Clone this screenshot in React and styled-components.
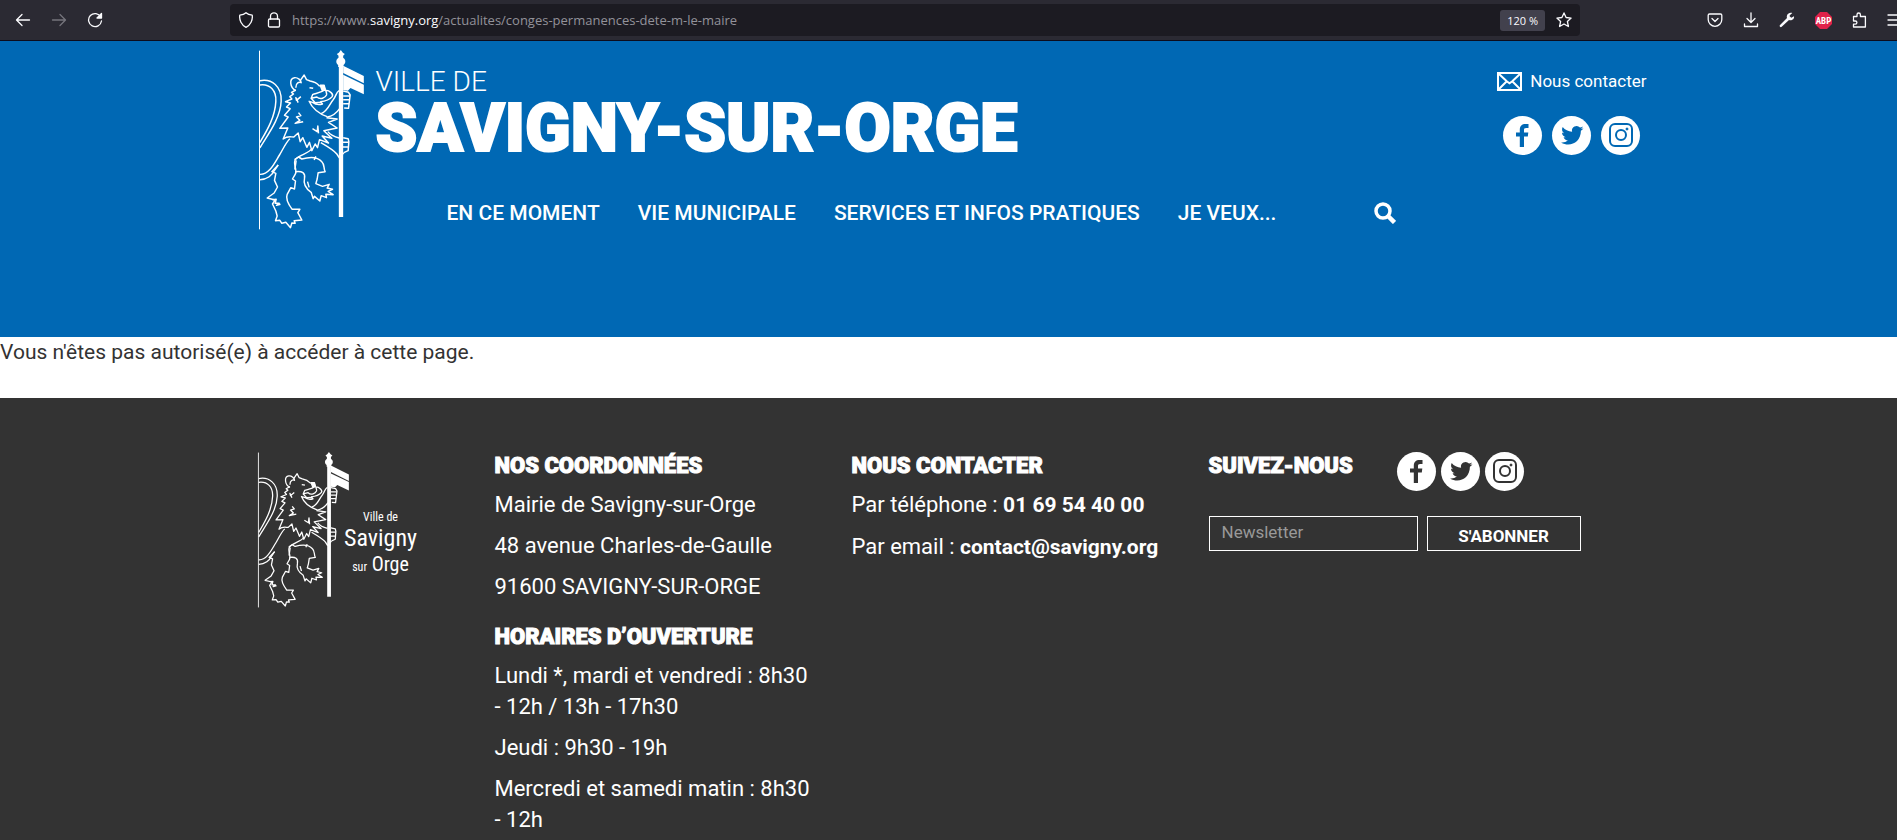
import React from 'react';
import styled, { createGlobalStyle, css } from 'styled-components'

const GlobalStyle = createGlobalStyle`
  * {
    box-sizing: border-box;
  }
  body {
    margin: 0;
    background: #333;
    font-family: 'Roboto', sans-serif;
    font-size: 22px;
    line-height: 31px;
    color: #333;
    overflow-x: hidden;
  }
  a {
    color: inherit;
    text-decoration: none;
  }
  p, h1, h2 {
    margin: 0;
  }
`

/* ---- browser bar ---- */

const Toolbar = styled.div`
  display: flex;
  align-items: center;
  height: 41px;
  padding-left: 5px;
  background: #2b2a33;
  border-bottom: 1px solid #0c0c1d;
  overflow: hidden;
`

const ToolGroup = styled.div`
  display: flex;
  flex: none;
  ${(p) => p.$end && css`margin-right: -16px;`}
`

const Spring = styled.div`
  flex: 1;
  max-width: 117px;
`

const ToolButton = styled.button`
  display: flex;
  align-items: center;
  justify-content: center;
  width: 36px;
  height: 32px;
  padding: 0;
  border: 0;
  background: none;
  color: #fbfbfe;
  &:disabled {
    color: #75747c;
  }
`

const UrlBar = styled.div`
  display: flex;
  align-items: center;
  flex: 1;
  height: 32px;
  padding: 0 2px;
  border-radius: 4px;
  background: #1c1b22;
`

const UrlButton = styled.button`
  display: flex;
  align-items: center;
  justify-content: center;
  width: 28px;
  height: 28px;
  padding: 0;
  border: 0;
  background: none;
  color: #fbfbfe;
`

const Url = styled.div`
  flex: 1;
  padding-left: 4px;
  font-family: 'Open Sans', sans-serif;
  font-size: 13px;
  line-height: 20px;
  color: #93929a;
  white-space: nowrap;
  overflow: hidden;
  b {
    font-weight: 400;
    color: #fbfbfe;
  }
`

const ZoomLevel = styled.button`
  height: 21px;
  margin-right: 5px;
  padding: 0 7px;
  border: 0;
  border-radius: 3px;
  background: #42414d;
  color: #fbfbfe;
  font-family: 'Open Sans', sans-serif;
  font-size: 11px;
`

/* ---- page header ---- */

const Header = styled.header`
  min-height: 296px;
  background: #0068b4;
  color: white;
`

const HeaderInner = styled.div`
  display: flex;
  align-items: flex-start;
  max-width: 1404px;
  margin: 0 auto;
  padding: 9px 4px 0 11px;
`

const HeaderMain = styled.div`
  flex: 1;
  padding: 16px 0 0 11px;
`

const CityPrefix = styled.div`
  font-size: 28px;
  font-weight: 300;
  line-height: 32px;
`

const CityName = styled.h1`
  font-size: 67px;
  font-weight: 900;
  line-height: 60px;
  -webkit-text-stroke: 2px white;
`

const Nav = styled.nav`
  display: flex;
  align-items: center;
  gap: 38px;
  padding: 39px 0 0 71px;
  font-size: 21px;
  font-weight: 500;
  line-height: 32px;
`

const SearchButton = styled.button`
  display: flex;
  margin-left: 60px;
  padding: 0;
  border: 0;
  background: none;
  color: white;
`

const HeaderContact = styled.div`
  display: flex;
  flex-direction: column;
  align-items: center;
  gap: 20px;
  padding-top: 16px;
`

const ContactLink = styled.a`
  display: flex;
  align-items: center;
  gap: 8px;
  font-size: 17px;
  line-height: 30px;
`

const Socials = styled.div`
  display: flex;
  gap: ${(p) => p.$gap};
`

const SocialLink = styled.a`
  display: flex;
  width: 39px;
  height: 39px;
  border-radius: 50%;
  background: white;
  color: ${(p) => p.$color};
`

/* ---- message ---- */

const Message = styled.main`
  min-height: 61px;
  background: white;
  font-size: 21px;
`

/* ---- footer ---- */

const Footer = styled.footer`
  padding-top: 54px;
  background: #333;
  color: white;
  border-bottom: 2px solid #393337;
`

const FooterGrid = styled.div`
  display: grid;
  grid-template-columns: 2fr 3fr 3fr 4fr;
  max-width: 1428px;
  margin: 0 auto;
`

const FooterCol = styled.div`
  padding: 0 20px 0 22px;
  p {
    margin-bottom: 10px;
  }
  h2 + p {
    margin-top: 10px;
  }
  p + h2 {
    margin-top: 21px;
  }
`

const FooterTitle = styled.h2`
  font-size: 22px;
  font-weight: 900;
  line-height: 27px;
  text-transform: uppercase;
  -webkit-text-stroke: 1px white;
`

const Strong = styled.a`
  font-size: 21px;
  font-weight: 700;
`

const FooterBrand = styled.a`
  display: flex;
  align-items: flex-start;
`

const BrandText = styled.span`
  display: flex;
  flex-direction: column;
  align-items: center;
  width: 74px;
  margin-left: -6px;
  padding-top: 57px;
  font-family: 'Roboto Condensed', 'Roboto', sans-serif;
  font-size: 20px;
  line-height: 26px;
  small {
    font-size: 12px;
    line-height: 16px;
  }
`

const BrandTown = styled.span`
  font-size: 24px;
  line-height: 26px;
`

const FollowRow = styled.div`
  display: flex;
  align-items: flex-start;
  gap: 44px;
`

const NewsletterForm = styled.form`
  display: flex;
  gap: 9px;
  margin-top: 25px;
`

const NewsletterInput = styled.input`
  width: 209px;
  height: 35px;
  padding: 0 12px 4px;
  border: 1px solid white;
  border-radius: 0;
  background: none;
  color: white;
  font-family: inherit;
  font-size: 17px;
  &::placeholder {
    color: #999;
  }
`

const SubmitButton = styled.button`
  width: 154px;
  height: 35px;
  padding: 5px 0 0;
  border: 1px solid white;
  background: none;
  color: white;
  font-family: inherit;
  font-size: 17px;
  font-weight: 700;
`

const Lion = ({ width, height }) => (
  <svg width={width} height={height} viewBox="55 29 320 540" fill="none" stroke="white" strokeWidth="4.4" strokeLinejoin="round" aria-hidden="true">
    <path d="M59 31V567" strokeWidth="3" />
    {/* staff and pennant */}
    <g fill="white" stroke="none">
      <path d="M297 76h13v454h-13z" />
      <path d="M303 29l6 8 6 4-5 5v6c11 8 6 18 1 22v6h-16v-6c-5-4-10-14 1-22v-6l-5-5 6-4z" />
      <path d="M310 76l62 31v22l-62-31z" />
      <path d="M310 103l62 30v29l-40-19-8 8-14-2z" />
    </g>
    {/* tail */}
    <path d="M60 121C96 114 126 138 124 182C122 236 80 288 60 323" />
    <path d="M60 134C90 130 110 150 108 183C106 232 78 276 60 307" />
    <path d="M60 402C88 404 104 368 119 344C130 326 138 306 150 295" />
    <path d="M60 418C82 418 98 404 104 390L115 374" />
    {/* head */}
    <path d="M168 151C150 143 147 114 164 112C174 111 184 120 184 127C178 124 168 127 168 142" />
    <path d="M181 121L193 104L200 118L211 122C222 124 231 128 238 136L252 137L256 148C244 157 232 158 219 162L214 174L231 170C242 180 256 172 260 164C262 158 258 156 258 150C270 150 282 162 277 169C270 178 254 183 241 184" />
    <path d="M241 135h12l3 12-9 3z" fill="white" />
    <path d="M209 142l11 2M214 174L226 187L244 186L248 191C236 195 226 192 218 186L208 183C216 203 238 221 262 229" />
    {/* mane */}
    <path d="M168 149L155 156L161 161L150 169L156 176L137 184L152 188L140 200L151 205L134 225L145 230L120 264L144 263L130 296C143 286 152 290 162 290L175 278L181 304L189 292L201 321L209 306L216 331L226 311L233 322L239 298L266 308L247 287L276 294L252 271L292 263L266 246L292 236L260 232" />
    <path d="M183 169l-13 11-2-8 7 15M176 217l7 9-13 4 10 10-14 9 24-5M218 265l14 9 2-17 2 22" />
    {/* fore legs */}
    <path d="M244 220C266 210 268 192 280 178C290 166 288 156 298 151M262 230C278 228 290 218 300 204" />
    <path d="M310 152L326 156L331 164L326 204L313 203M310 167h19M310 178h19M310 190h17" />
    <path d="M264 274C272 284 286 290 298 293M243 307C262 318 282 330 291 341L298 352L312 337" />
    <path d="M310 292L325 295L327 304L325 331L312 337M300 306h26M300 320h26" />
    {/* hind legs */}
    <path d="M215 326C208 338 180 344 168 356C156 370 175 388 166 402L158 416L167 422L164 446L153 442L142 462C136 478 147 494 157 507L180 507L174 517L186 539L163 541L166 549L156 548L152 562L138 546L126 549L120 540L107 541L112 527L108 512L98 491L106 479L82 473L103 458L113 440L104 420L108 399L96 394L115 374" />
    <path d="M98 478l11-1-3 12h12l-8 6 12-3M165 388l4-28" />
    <path d="M164 358L176 350L186 356C206 350 232 348 246 364C256 374 250 384 256 394L235 397L232 416L228 430L248 438L268 432L262 443L278 447L265 453L280 463L258 462L260 472L244 466L240 482L224 468L220 475L214 456C200 446 190 430 194 414C197 398 188 391 166 394M228 348l-5 11M203 424l5 17" />
  </svg>
)

const socialShapes = {
  Facebook: <path fill="currentColor" d="M16.800 31V20.500H13V16.500h3.800v-2.800C16.800 10 19 8 22.500 8H25.500v4H23.200c-1.800 0-2.200.8-2.200 2.200v2.300h4.300l-.5 4H21V31z" />,
  Twitter: <path fill="currentColor" d="M31.500 12.200c-.8.4-1.700.6-2.600.7.9-.5 1.600-1.400 2-2.400-.9.5-1.900.9-2.900 1.100a4.600 4.600 0 0 0-7.900 4.200c-3.800-.2-7.200-2-9.400-4.800-1.300 2.200-.6 4.900 1.400 6.200-.8 0-1.500-.2-2.100-.6 0 2.300 1.600 4.200 3.700 4.600-.7.2-1.400.2-2.100.1.600 1.800 2.300 3.200 4.300 3.200a9.300 9.300 0 0 1-6.800 1.900c8.500 5.300 19.800.200 19.800-11.700.9-.6 1.900-1.500 2.600-2.500z" />,
  Instagram: (
    <g fill="none" stroke="currentColor" strokeWidth="2">
      <rect x="9" y="8" width="22" height="22" rx="5" />
      <circle cx="20" cy="19" r="5" />
      <circle cx="26" cy="13" r="1" fill="currentColor" strokeWidth="1" />
    </g>
  ),
}

const SocialLinks = ({ gap, color }) => (
  <Socials $gap={gap}>
    {Object.keys(socialShapes).map((name) => (
      <SocialLink key={name} href="#" $color={color} aria-label={name}>
        <svg width="39" height="39" viewBox="0 0 39 39" aria-hidden="true">{socialShapes[name]}</svg>
      </SocialLink>
    ))}
  </Socials>
)

const Icon = ({ children, size = 16 }) => (
  <svg width={size} height={size} viewBox="0 0 16 16" fill="none" stroke="currentColor" strokeWidth="1.300" strokeLinecap="round" strokeLinejoin="round" aria-hidden="true">
    {children}
  </svg>
)

const BrowserBar = () => (
  <Toolbar>
    <ToolGroup>
      <ToolButton aria-label="Précédent"><Icon><path d="M14.500 8H2M7 2.500L1.500 8 7 13.500" /></Icon></ToolButton>
      <ToolButton aria-label="Suivant" disabled><Icon><path d="M1.500 8H14M9 2.500L14.500 8 9 13.500" /></Icon></ToolButton>
      <ToolButton aria-label="Actualiser"><Icon><path d="M13.800 5A6.500 6.500 0 1 0 14.500 9" /><path d="M14.500 1.500V6H10z" fill="currentColor" /></Icon></ToolButton>
    </ToolGroup>
    <Spring />
    <UrlBar>
      <UrlButton aria-label="Protection"><Icon><path d="M8 .8C6.500 2.200 4 3 1.800 3.200 1 8 3.500 13 8 15.300 12.500 13 15 8 14.200 3.200 12 3 9.500 2.200 8 .8z" /></Icon></UrlButton>
      <UrlButton aria-label="Connexion sécurisée"><Icon><rect x="2.500" y="7" width="11" height="8" rx="1.200" /><path d="M4.500 7V4.300a3.500 3.500 0 0 1 7 0V7" /></Icon></UrlButton>
      <Url>https://www.<b>savigny.org</b>/actualites/conges-permanences-dete-m-le-maire</Url>
      <ZoomLevel>120 %</ZoomLevel>
      <UrlButton aria-label="Marque-page"><Icon><path d="M8 .9l2.100 4.600 5 .6-3.700 3.400 1 5L8 12l-4.400 2.500 1-5L.9 6.100l5-.6z" /></Icon></UrlButton>
    </UrlBar>
    <Spring />
    <ToolGroup $end>
      <ToolButton aria-label="Pocket"><Icon><path d="M2.500 2h11c.8 0 1.300.5 1.300 1.300V7.500a6.800 6.800 0 0 1-13.600 0V3.300C1.200 2.500 1.700 2 2.500 2z" /><path d="M5 6.500l3 3 3-3" /></Icon></ToolButton>
      <ToolButton aria-label="Téléchargements"><Icon><path d="M8 .8V10M4 6.500L8 10.500l4-4M1.500 12v2.500h13V12" /></Icon></ToolButton>
      <ToolButton aria-label="Outils"><Icon><path stroke="none" fill="currentColor" d="M15 4.200l-2.700 1.500-1.700-1.500.200-.900L13.300 1C11 .300 8 1.400 7.800 4.300c0 .6 0 1.200.2 1.700L1 13c-.5.500-.5 1.200 0 1.700.5.600 1.200.600 1.700 0L10 8c2.800.9 5.600-1 5-3.800z" /></Icon></ToolButton>
      <ToolButton aria-label="Adblock Plus">
        <svg width="17" height="17" viewBox="0 0 17 17">
          <path fill="#e1224a" d="M5 0h7l5 5v7l-5 5H5l-5-5V5z" />
          <text x="8.500" y="11.500" fill="white" fontFamily="Roboto Condensed" fontWeight="700" fontSize="9" textAnchor="middle">ABP</text>
        </svg>
      </ToolButton>
      <ToolButton aria-label="Extensions"><Icon><path d="M2.500 6V4.500H6V2.700a1.700 1.700 0 0 1 3.400 0v1.800h5V15H2.500v-2.800h1.800a1.600 1.600 0 0 0 0-3.200H2.500V7" /></Icon></ToolButton>
      <ToolButton aria-label="Menu"><Icon><path d="M1 3h14M1 8h14M1 13h14" /></Icon></ToolButton>
    </ToolGroup>
  </Toolbar>
)

const navItems = ['EN CE MOMENT', 'VIE MUNICIPALE', 'SERVICES ET INFOS PRATIQUES', 'JE VEUX...']

const App = () => {
  return (
    <>
      <GlobalStyle />
      <BrowserBar />

      <Header>
        <HeaderInner>
          <a href="#" aria-label="Accueil"><Lion width={107} height={180} /></a>
          <HeaderMain>
            <CityPrefix>VILLE DE</CityPrefix>
            <CityName>SAVIGNY-SUR-ORGE</CityName>
            <Nav>
              {navItems.map((item) => <a href="#" key={item}>{item}</a>)}
              <SearchButton aria-label="Rechercher">
                <svg width="22" height="22" viewBox="0 0 22 22" fill="none" stroke="currentColor" aria-hidden="true">
                  <circle cx="9" cy="9" r="7" strokeWidth="3.500" />
                  <path d="M14 14l6.500 6.500" strokeWidth="4.500" />
                </svg>
              </SearchButton>
            </Nav>
          </HeaderMain>
          <HeaderContact>
            <ContactLink href="#">
              <svg width="25" height="19" viewBox="0 0 25 19" fill="none" stroke="currentColor" aria-hidden="true">
                <rect x="1" y="1" width="23" height="17" strokeWidth="2" />
                <path d="M2 2l8 7.500 2.500 1.800 2.500-1.800L23 2M2 17l7.500-7.500M23 17l-7.500-7.500" strokeWidth="2" />
              </svg>
              Nous contacter
            </ContactLink>
            <SocialLinks gap="10px" color="#0068b4" />
          </HeaderContact>
        </HeaderInner>
      </Header>

      <Message>
        <p>Vous n'êtes pas autorisé(e) à accéder à cette page.</p>
      </Message>

      <Footer>
        <FooterGrid>
          <FooterCol>
            <FooterBrand href="#">
              <Lion width={93} height={156} />
              <BrandText>
                <small>Ville de</small>
                <BrandTown>Savigny</BrandTown>
                <span><small>sur</small> Orge</span>
              </BrandText>
            </FooterBrand>
          </FooterCol>

          <FooterCol>
            <FooterTitle>Nos coordonnées</FooterTitle>
            <p>Mairie de Savigny-sur-Orge</p>
            <p>48 avenue Charles-de-Gaulle</p>
            <p>91600 SAVIGNY-SUR-ORGE</p>
            <FooterTitle>Horaires d’ouverture</FooterTitle>
            <p>Lundi *, mardi et vendredi : 8h30 - 12h / 13h - 17h30</p>
            <p>Jeudi : 9h30 - 19h</p>
            <p>Mercredi et samedi matin : 8h30 - 12h</p>
          </FooterCol>

          <FooterCol>
            <FooterTitle>Nous contacter</FooterTitle>
            <p>Par téléphone : <Strong href="tel:0169544000">01 69 54 40 00</Strong></p>
            <p>Par email : <Strong href="mailto:contact@savigny.org">contact@savigny.org</Strong></p>
          </FooterCol>

          <FooterCol>
            <FollowRow>
              <FooterTitle>Suivez-nous</FooterTitle>
              <SocialLinks gap="5px" color="#333" />
            </FollowRow>
            <NewsletterForm onSubmit={(e) => e.preventDefault()}>
              <NewsletterInput type="email" placeholder="Newsletter" aria-label="Newsletter" />
              <SubmitButton type="submit">S'ABONNER</SubmitButton>
            </NewsletterForm>
          </FooterCol>
        </FooterGrid>
      </Footer>
    </>
  )
}

export default App;
